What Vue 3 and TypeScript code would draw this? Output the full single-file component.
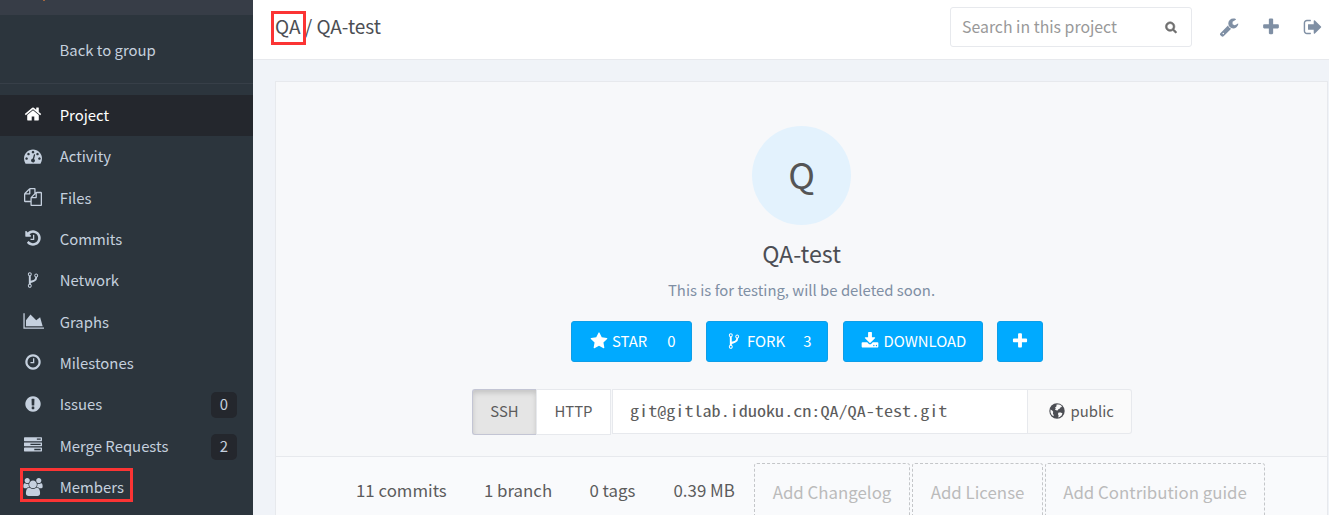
<script setup lang="ts">
interface NavItem {
  label: string
  icon: string
  count?: number
  active?: boolean
  marked?: boolean
}

interface Glyph {
  box: string
  d: string
}

const icons: Record<string, Glyph> = {
  home: { box: '0 0 1792 1792', d: 'M1472 992v480q0 26-19 45t-45 19h-384v-384h-256v384h-384q-26 0-45-19t-19-45v-480q0-1 .5-3t.5-3l575-474 575 474q1 2 1 6zm223-69l-62 74q-8 9-21 11h-3q-13 0-21-7l-692-577-692 577q-12 8-24 7-13-2-21-11l-62-74q-8-10-7-23.5t11-21.5l719-599q32-26 76-26t76 26l244 204v-195q0-14 9-23t23-9h192q14 0 23 9t9 23v408l219 182q10 8 11 21.5t-7 23.5z' },
  gauge: { box: '0 0 1792 1792', d: 'M384 1152q0-53-37.5-90.5t-90.5-37.5-90.5 37.5-37.5 90.5 37.5 90.5 90.5 37.5 90.5-37.5 37.5-90.5zm192-448q0-53-37.5-90.5t-90.5-37.5-90.5 37.5-37.5 90.5 37.5 90.5 90.5 37.5 90.5-37.5 37.5-90.5zm428 481l101-382q6-26-7.5-48.5t-38.5-29.5-48 6.5-30 39.5l-101 382q-60 5-107 43.5t-63 98.5q-20 77 20 146t117 89 146-20 89-117q16-60-6-117t-72-91zm660-33q0-53-37.5-90.5t-90.5-37.5-90.5 37.5-37.5 90.5 37.5 90.5 90.5 37.5 90.5-37.5 37.5-90.5zm-640-640q0-53-37.5-90.5t-90.5-37.5-90.5 37.5-37.5 90.5 37.5 90.5 90.5 37.5 90.5-37.5 37.5-90.5zm448 192q0-53-37.5-90.5t-90.5-37.5-90.5 37.5-37.5 90.5 37.5 90.5 90.5 37.5 90.5-37.5 37.5-90.5zm320 448q0 261-141 483-19 29-54 29h-1402q-35 0-54-29-141-221-141-483 0-182 71-348t191-286 286-191 348-71 348 71 286 191 191 286 71 348z' },
  files: { box: '0 0 1792 1792', d: 'M1696 384q40 0 68 28t28 68v1216q0 40-28 68t-68 28h-960q-40 0-68-28t-28-68v-288h-544q-40 0-68-28t-28-68v-672q0-40 20-88t48-76l408-408q28-28 76-48t88-20h416q40 0 68 28t28 68v328q68-40 128-40h416zm-544 213l-299 299h299v-299zm-640-384l-299 299h299v-299zm196 647l316-316v-416h-384v416q0 40-28 68t-68 28h-416v640h512v-256q0-40 20-88t48-76zm956 804v-1152h-384v416q0 40-28 68t-68 28h-416v640h896z' },
  history: { box: '0 0 1792 1792', d: 'M1664 896q0 156-61 298t-164 245-245 164-298 61q-172 0-327-72.5t-264-204.5q-7-10-6.5-22.5t8.5-20.5l137-138q10-9 25-9 16 2 23 12 73 95 179 147t225 52q104 0 198.5-40.5t163.5-109.5 109.5-163.5 40.5-198.5-40.5-198.5-109.5-163.5-163.5-109.5-198.5-40.5q-98 0-188 35.5t-160 101.5l137 138q31 30 14 69-17 40-59 40h-448q-26 0-45-19t-19-45v-448q0-42 40-59 39-17 69 14l130 129q107-101 244.5-156.5t284.5-55.5q156 0 298 61t245 164 164 245 61 298zm-640-288v448q0 14-9 23t-23 9h-320q-14 0-23-9t-9-23v-64q0-14 9-23t23-9h224v-352q0-14 9-23t23-9h64q14 0 23 9t9 23z' },
  fork: { box: '0 0 1792 1792', d: 'M672 1472q0-40-28-68t-68-28-68 28-28 68 28 68 68 28 68-28 28-68zm0-1152q0-40-28-68t-68-28-68 28-28 68 28 68 68 28 68-28 28-68zm640 128q0-40-28-68t-68-28-68 28-28 68 28 68 68 28 68-28 28-68zm96 0q0 52-26 96.5t-70 69.5q-2 287-226 414-67 38-203 81-128 40-169.5 71t-41.5 100v26q44 25 70 69.5t26 96.5q0 80-56 136t-136 56-136-56-56-136q0-52 26-96.5t70-69.5v-820q-44-25-70-69.5t-26-96.5q0-80 56-136t136-56 136 56 56 136q0 52-26 96.5t-70 69.5v497q54-26 154-57 55-17 87.5-29.5t70.5-31 59-39.5 40.5-51 28-69.5 8.5-91.5q-44-25-70-69.5t-26-96.5q0-80 56-136t136-56 136 56 56 136z' },
  chart: { box: '60 0 1792 1792', d: 'M2048 1536v128h-2048v-1536h128v1408h1920zm-384-1024l256 896h-1664v-576l448-576 576 576z' },
  clock: { box: '0 0 1792 1792', d: 'M1024 544v448q0 14-9 23t-23 9h-320q-14 0-23-9t-9-23v-64q0-14 9-23t23-9h224v-352q0-14 9-23t23-9h64q14 0 23 9t9 23zm416 352q0-148-73-273t-198-198-273-73-273 73-198 198-73 273 73 273 198 198 273 73 273-73 198-198 73-273zm224 0q0 209-103 385.5t-279.5 279.5-385.5 103-385.5-103-279.5-279.5-103-385.5 103-385.5 279.5-279.5 385.5-103 385.5 103 279.5 279.5 103 385.5z' },
  alert: { box: '0 0 1792 1792', d: 'M896 128q209 0 385.5 103t279.5 279.5 103 385.5-103 385.5-279.5 279.5-385.5 103-385.5-103-279.5-279.5-103-385.5 103-385.5 279.5-279.5 385.5-103zm128 1247v-190q0-14-9-23.5t-22-9.5h-192q-13 0-23 10t-10 23v190q0 13 10 23t23 10h192q13 0 22-9.5t9-23.5zm-2-344l18-621q0-12-10-18-10-8-24-8h-220q-14 0-24 8-10 6-10 18l17 621q0 10 10 17.5t24 7.5h185q14 0 23.5-7.5t10.5-17.5z' },
  tasks: { box: '0 0 1792 1792', d: 'M1024 1408h640v-128h-640v128zm-384-512h1024v-128h-1024v128zm640-512h384v-128h-384v128zm512 832v256q0 26-19 45t-45 19h-1664q-26 0-45-19t-19-45v-256q0-26 19-45t45-19h1664q26 0 45 19t19 45zm0-512v256q0 26-19 45t-45 19h-1664q-26 0-45-19t-19-45v-256q0-26 19-45t45-19h1664q26 0 45 19t19 45zm0-512v256q0 26-19 45t-45 19h-1664q-26 0-45-19t-19-45v-256q0-26 19-45t45-19h1664q26 0 45 19t19 45z' },
  users: { box: '128 0 1792 1792', d: 'M657 896q-162 5-265 128h-134q-82 0-138-40.5t-56-118.5q0-353 124-353 6 0 43.5 21t97.5 42.5 119 21.5q67 0 133-23-5 37-5 66 0 139 81 256zm1071 637q0 120-73 189.5t-194 69.5h-874q-121 0-194-69.5t-73-189.5q0-53 3.5-103.5t14-109 26.5-108.5 43-97.5 62-81 85.5-53.5 111.5-20q10 0 43 21.5t73 48 107 48 135 21.5 135-21.5 107-48 73-48 43-21.5q61 0 111.5 20t85.5 53.5 62 81 43 97.5 26.5 108.5 14 109 3.5 103.5zm-1024-1277q0 106-75 181t-181 75-181-75-75-181 75-181 181-75 181 75 75 181zm704 384q0 159-112.5 271.5t-271.5 112.5-271.5-112.5-112.5-271.5 112.5-271.5 271.5-112.5 271.5 112.5 112.5 271.5zm576 225q0 78-56 118.5t-138 40.5h-134q-103-123-265-128 81-117 81-256 0-29-5-66 66 23 133 23 59 0 119-21.5t97.5-42.5 43.5-21q124 0 124 353zm-128-609q0 106-75 181t-181 75-181-75-75-181 75-181 181-75 181 75 75 181z' },
  wrench: { box: '0 0 1792 1792', d: 'M448 1472q0-26-19-45t-45-19-45 19-19 45 19 45 45 19 45-19 19-45zm644-420l-682 682q-37 37-90 37-52 0-91-37l-106-108q-38-36-38-90 0-53 38-91l681-681q39 98 114.5 173.5t173.5 114.5zm634-435q0 39-23 106-47 134-164.5 217.5t-258.5 83.5q-185 0-316.5-131.5t-131.5-316.5 131.5-316.5 316.5-131.5q58 0 121.5 16.5t107.5 46.5q16 11 16 28t-16 28l-293 169v224l193 107q5-3 79-48.5t135.5-81 70.5-35.5q15 0 23.5 10t8.5 25z' },
  plus: { box: '0 0 1792 1792', d: 'M1600 736v192q0 40-28 68t-68 28h-416v416q0 40-28 68t-68 28h-192q-40 0-68-28t-28-68v-416h-416q-40 0-68-28t-28-68v-192q0-40 28-68t68-28h416v-416q0-40 28-68t68-28h192q40 0 68 28t28 68v416h416q40 0 68 28t28 68z' },
  signout: { box: '0 0 1792 1792', d: 'M704 1440q0 4 1 20t.5 26.5-3 23.5-10 19.5-20.5 6.5h-320q-119 0-203.5-84.5t-84.5-203.5v-704q0-119 84.5-203.5t203.5-84.5h320q13 0 22.5 9.5t9.5 22.5q0 4 1 20t.5 26.5-3 23.5-10 19.5-20.5 6.5h-320q-66 0-113 47t-47 113v704q0 66 47 113t113 47h312l11.5 1 11.5 3 8 5.5 7 9 2 13.5zm928-544q0 26-19 45l-544 544q-19 19-45 19t-45-19-19-45v-288h-448q-26 0-45-19t-19-45v-384q0-26 19-45t45-19h448v-288q0-26 19-45t45-19 45 19l544 544q19 19 19 45z' },
  star: { box: '0 0 1792 1792', d: 'M1728 647q0 22-26 48l-363 354 86 500q1 7 1 20 0 21-10.5 35.5t-30.5 14.5q-19 0-40-12l-449-236-449 236q-22 12-40 12-21 0-31.5-14.5t-10.5-35.5q0-6 2-20l86-500-364-354q-25-27-25-48 0-37 56-46l502-73 225-455q19-41 49-41t49 41l225 455 502 73q56 9 56 46z' },
  download: { box: '0 0 1792 1792', d: 'M1344 1344q0-26-19-45t-45-19-45 19-19 45 19 45 45 19 45-19 19-45zm256 0q0-26-19-45t-45-19-45 19-19 45 19 45 45 19 45-19 19-45zm128-224v320q0 40-28 68t-68 28h-1472q-40 0-68-28t-28-68v-320q0-40 28-68t68-28h465l135 136q58 56 136 56t136-56l136-136h464q40 0 68 28t28 68zm-325-569q17 41-14 70l-448 448q-18 19-45 19t-45-19l-448-448q-31-29-14-70 17-39 59-39h256v-448q0-26 19-45t45-19h256q26 0 45 19t19 45v448h256q42 0 59 39z' },
  search: { box: '0 0 1792 1792', d: 'M1216 832q0-185-131.5-316.5t-316.5-131.5-316.5 131.5-131.5 316.5 131.5 316.5 316.5 131.5 316.5-131.5 131.5-316.5zm512 832q0 52-38 90t-90 38q-54 0-90-38l-343-342q-179 124-399 124-143 0-273.5-55.5t-225-150-150-225-55.5-273.5 55.5-273.5 150-225 225-150 273.5-55.5 273.5 55.5 225 150 150 225 55.5 273.5q0 220-124 399l343 343q37 37 37 90z' },
}

const nav: NavItem[] = [
  { label: 'Project', icon: 'home', active: true },
  { label: 'Activity', icon: 'gauge' },
  { label: 'Files', icon: 'files' },
  { label: 'Commits', icon: 'history' },
  { label: 'Network', icon: 'fork' },
  { label: 'Graphs', icon: 'chart' },
  { label: 'Milestones', icon: 'clock' },
  { label: 'Issues', icon: 'alert', count: 0 },
  { label: 'Merge Requests', icon: 'tasks', count: 2 },
  { label: 'Members', icon: 'users', marked: true },
]

const actions = [
  { key: 'star', icon: 'star', label: 'STAR', count: '0' },
  { key: 'fork', icon: 'fork', label: 'FORK', count: '3' },
  { key: 'download', icon: 'download', label: 'DOWNLOAD', count: '' },
  { key: 'more', icon: 'plus', label: '', count: '' },
]

const stats = ['11 commits', '1 branch', '0 tags', '0.39 MB']
const additions = ['Add Changelog', 'Add License', 'Add Contribution guide']
const tools = ['wrench', 'plus', 'signout']
</script>

<template>
  <div class="app">
    <aside class="sidebar">
      <div class="brand"><i class="brand-tip"></i></div>
      <a class="back">Back to group</a>
      <nav class="nav">
        <a v-for="item in nav" :key="item.label" class="nav-item" :class="{ active: item.active }">
          <svg class="icon" :viewBox="icons[item.icon].box"><path fill-rule="nonzero" :d="icons[item.icon].d" /></svg>
          <span class="nav-label">{{ item.label }}</span>
          <span v-if="item.count !== undefined" class="count">{{ item.count }}</span>
          <i v-if="item.marked" class="mark mark-members"></i>
        </a>
      </nav>
    </aside>

    <main class="main">
      <header class="header">
        <h1 class="crumbs"><span class="crumb-group">QA<i class="mark mark-group"></i></span> / QA-test</h1>
        <div class="search">
          <span class="search-text">Search in this project</span>
          <svg class="icon" :viewBox="icons.search.box"><path :d="icons.search.d" /></svg>
        </div>
        <div class="tools">
          <svg v-for="t in tools" :key="t" class="icon" :viewBox="icons[t].box"><path :d="icons[t].d" /></svg>
        </div>
      </header>

      <section class="card">
        <div class="hero">
          <div class="avatar">Q</div>
          <h2 class="title">QA-test</h2>
          <p class="desc">This is for testing, will be deleted soon.</p>
          <div class="actions">
            <a v-for="a in actions" :key="a.key" class="btn" :class="'btn-' + a.key">
              <svg class="icon" :viewBox="icons[a.icon].box"><path :d="icons[a.icon].d" /></svg>
              <span v-if="a.label" class="btn-label">{{ a.label }}</span>
              <span v-if="a.count" class="btn-count">{{ a.count }}</span>
            </a>
          </div>
          <div class="clone">
            <a class="proto ssh">SSH</a>
            <a class="proto http">HTTP</a>
            <div class="url"><span class="url-text">git@gitlab.iduoku.cn:QA/QA-test.git</span></div>
            <div class="visibility">
              <svg class="icon" viewBox="0 0 18 18">
                <circle cx="9" cy="9" r="7.7" />
                <path class="sea" d="M8.6 2.6 11.2 2.4 13.2 3.6 14 5 12.6 5.2 11.9 6.6 10.4 7.2 9.6 8.6 8 8.2 6.9 7.2 7.9 6.2 7 5.6 8.4 4.4zM2.5 7.6 4.2 8.4 5.2 9.8 4.9 11.6 5.8 13.2 5.2 14.2 3.4 12.4 2.5 10.2zM10.6 10.6 12.6 10.4 14.4 11.2 13.6 13.4 11.6 15 10.2 15.4 10.6 13.4 9.9 12z" />
              </svg>
              <span>public</span>
            </div>
          </div>
        </div>
        <div class="stats">
          <span v-for="s in stats" :key="s" class="stat">{{ s }}</span>
          <a v-for="a in additions" :key="a" class="add">{{ a }}</a>
        </div>
      </section>
    </main>
  </div>
</template>

<style>
body {
  overflow: hidden;
}
</style>

<style scoped>
* {
  box-sizing: border-box;
}
.app {
  display: flex;
  width: 1329px;
  height: 515px;
  overflow: hidden;
  background: #f0f3f8;
  font-family: "Noto Sans CJK SC", "Noto Sans", sans-serif;
  font-size: 14.88px;
  color: #5c5c5c;
  white-space: nowrap;
}
.icon {
  display: block;
  flex: none;
  width: 18px;
  height: 18px;
  fill: currentColor;
  overflow: visible;
}

.sidebar {
  flex: none;
  width: 253px;
  height: 515px;
  background: #2c353d;
  color: #c5d0de;
}
.brand {
  height: 15px;
  background: #373d47;
}
.brand-tip {
  display: block;
  width: 2px;
  height: 1px;
  margin-left: 43px;
  background: #a0653f;
}
.back {
  display: block;
  height: 69px;
  padding-left: 59.5px;
  border-bottom: 1px solid #373f48;
  line-height: 69px;
}
.nav {
  padding-top: 11px;
}
.nav-item {
  position: relative;
  display: flex;
  align-items: center;
  height: 41.38px;
  padding: 0 16px 0 24.4px;
}
.nav-item .icon {
  margin-top: -3px;
}
.nav-item.active {
  background: #24272d;
  color: #fff;
}
.nav-label {
  flex: 1;
  margin-left: 17.3px;
  padding-bottom: 1.8px;
  line-height: 38px;
}
.count {
  width: 26px;
  height: 26px;
  border-radius: 5px;
  background: #24272d;
  line-height: 24px;
  text-align: center;
}
.mark {
  position: absolute;
  border: 3px solid #fb3434;
}
.mark-members {
  left: 20px;
  top: 1px;
  width: 113px;
  height: 34px;
}
.mark-group {
  left: -4px;
  top: 0;
  width: 35px;
  height: 34px;
}

.main {
  flex: 1;
  min-width: 0;
}
.header {
  display: flex;
  align-items: center;
  height: 60px;
  padding: 0 6px 5px 22px;
  border-bottom: 1px solid #e7e9ed;
  background: #fff;
}
.crumbs {
  flex: 1;
  margin: -2px 0 0;
  font-size: 19px;
  font-weight: 400;
  line-height: 30px;
  color: #4c4e54;
}
.crumb-group {
  position: relative;
  display: inline-block;
}
.search {
  display: flex;
  align-items: center;
  justify-content: space-between;
  width: 242px;
  height: 40px;
  padding: 0 14px 0 11px;
  border: 1px solid #e7e9ed;
  border-radius: 3px;
  font-size: 15.85px;
  line-height: 38px;
  color: #999;
}
.search .icon {
  width: 12px;
  height: 12px;
  color: #6e6e6e;
  stroke: currentColor;
  stroke-width: 90;
}
.tools {
  display: flex;
  gap: 22px;
  margin-left: 27px;
  color: #7f8fa4;
}
.tools .icon {
  width: 20px;
  height: 20px;
}

.card {
  width: 1053px;
  height: 440px;
  margin: 21px 0 0 22px;
  border: 1px solid #e7e9ed;
  background: #f9fafc;
}
.hero {
  display: flex;
  flex-direction: column;
  align-items: center;
  height: 375px;
  padding-top: 44px;
  border-bottom: 1px solid #e7e9ed;
  background: #f7f8fa;
}
.avatar {
  width: 99px;
  height: 99px;
  border-radius: 50%;
  background: #e3f2fd;
  font-size: 36px;
  line-height: 95px;
  text-align: center;
  color: #555;
}
.title {
  margin: 13px 0 0;
  font-size: 23.2px;
  font-weight: 400;
  line-height: 30px;
  color: #4c4e54;
}
.desc {
  margin: 11px 0 0;
  line-height: 22px;
  color: #7f8fa4;
}
.actions {
  display: flex;
  margin: 20px 0 0 10px;
  gap: 14px;
}
.btn {
  display: flex;
  align-items: center;
  height: 41px;
  padding-left: 18px;
  border: 1px solid #0d9ee8;
  border-radius: 3px;
  background: #0af;
  line-height: 37px;
  color: #fff;
}
.btn .icon {
  margin-top: -2px;
}
.btn-star {
  width: 121px;
}
.btn-fork {
  width: 122px;
}
.btn-download {
  width: 140px;
  margin-left: 1px;
  padding-left: 17px;
}
.btn-more {
  width: 46px;
  padding-left: 13px;
}
.btn-label {
  margin-left: 4.5px;
  padding-bottom: 2px;
}
.btn-download .btn-label {
  margin-left: 5px;
}
.btn-count {
  margin-left: auto;
  padding: 0 15px 2px 0;
}
.clone {
  display: flex;
  margin: 27px 0 0 1px;
  line-height: 41px;
}
.proto {
  height: 46px;
  border: 1px solid #e7e9ed;
  text-align: center;
}
.ssh {
  width: 64px;
  border-color: #c3c5d4;
  border-right: 0;
  border-radius: 3px 0 0 3px;
  background: #e5e5e5;
  box-shadow: inset 0 3px 5px rgba(0, 0, 0, 0.14);
}
.http {
  width: 75px;
  background: #fff;
}
.url {
  width: 416px;
  height: 45px;
  margin-left: 1px;
  padding-left: 17px;
  border: 1px solid #e7e9ed;
  background: #fff;
  font-family: "Noto Sans Mono CJK SC", "DejaVu Sans Mono", monospace;
  font-size: 15px;
}
.url-text {
  display: inline-block;
  transform: scaleX(1.209);
  transform-origin: 0 50%;
}
.visibility {
  display: flex;
  align-items: center;
  gap: 4.5px;
  width: 104px;
  height: 45px;
  padding: 0 0 2px 20px;
  border: 1px solid #e7e9ed;
  border-left: 0;
  border-radius: 0 3px 3px 0;
  background: #fafafa;
}
.visibility .icon {
  color: #4c4e54;
}
.sea {
  fill: #fafafa;
}
.stats {
  display: grid;
  grid-template-columns: 128px 105.5px 84px 80.5px 156px 131px 220px;
  padding: 6px 0 0 80px;
  font-size: 16.85px;
  line-height: 54px;
}
.add {
  height: 58px;
  border: 1px dashed #c4c6c9;
  border-radius: 3px;
  line-height: 55px;
  text-align: center;
  color: #bbb;
}
.add + .add {
  margin-left: 2px;
  margin-right: -2px;
}
.add:last-child {
  margin-left: 4px;
  margin-right: -4px;
}
</style>
